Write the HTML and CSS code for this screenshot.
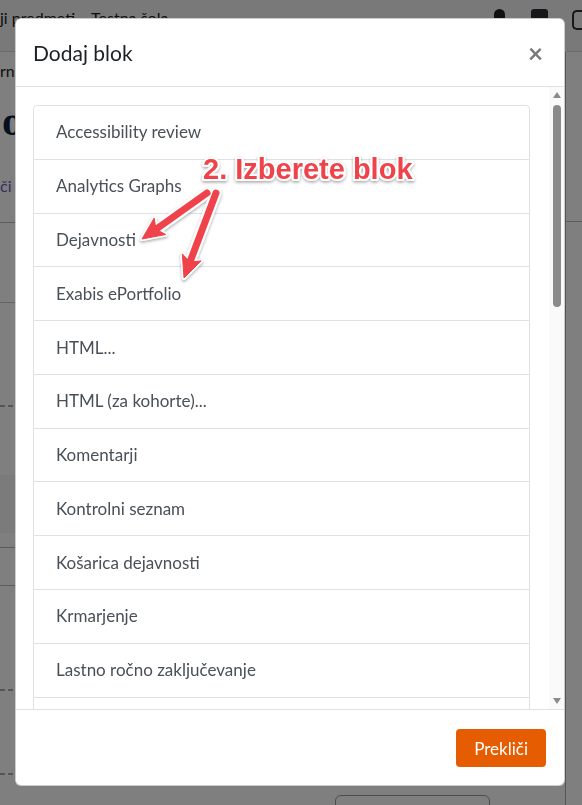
FILE: index.html
```html
<!DOCTYPE html>
<html lang="sl">
<head>
    <meta charset="UTF-8">
    <meta name="viewport" content="width=device-width, initial-scale=1.0">
    <title>Dodaj blok</title>
    <link rel="stylesheet" href="styles.css">
</head>
<body>
    <div id="stran">
        <div class="navbar">
            <span class="nav-link">ji predmeti</span>
            <span class="nav-link">Testna šola</span>
            <span class="nav-prostor"></span>
            <span class="zvonec"></span>
            <span class="avatar"></span>
            <span class="nav-rob"></span>
        </div>
        <div class="telo">
            <div class="levo">
                <div class="drob">rn</div>
                <div class="naslov">o</div>
                <div class="drob vijolicna">či</div>
                <div class="crta c1"></div>
                <div class="crta c2"></div>
                <div class="crtice c3"></div>
                <div class="pas c4"></div>
                <div class="crta c5"></div>
                <div class="crta c6"></div>
                <div class="crtice c7"></div>
                <div class="crtice c8"></div>
            </div>
            <div class="sredina">
                <div class="gumb-dno"></div>
            </div>
            <div class="desno">
                <div class="crta c9"></div>
            </div>
        </div>
    </div>

    <div class="ozadje">
        <div class="modal">
            <div class="modal-glava">
                <h5 class="modal-naslov">Dodaj blok</h5>
                <span class="zapri">×</span>
            </div>
            <div class="modal-telo">
                <div class="okno">
                    <div class="seznam">
                        <div class="postavka">Accessibility review</div>
                        <div class="postavka">Analytics Graphs</div>
                        <div class="postavka">Dejavnosti</div>
                        <div class="postavka">Exabis ePortfolio</div>
                        <div class="postavka">HTML...</div>
                        <div class="postavka">HTML (za kohorte)...</div>
                        <div class="postavka">Komentarji</div>
                        <div class="postavka">Kontrolni seznam</div>
                        <div class="postavka">Košarica dejavnosti</div>
                        <div class="postavka">Krmarjenje</div>
                        <div class="postavka">Lastno ročno zaključevanje</div>
                        <div class="postavka"></div>
                    </div>
                </div>
                <div class="drsnik">
                    <div class="drsnik-gor"></div>
                    <div class="drsnik-palec"></div>
                    <div class="drsnik-prostor"></div>
                    <div class="drsnik-dol"></div>
                </div>
            </div>
            <div class="modal-noga">
                <button class="gumb">Prekliči</button>
            </div>
        </div>
    </div>

    <svg class="opomba" width="582" height="805" viewBox="0 0 582 805">
        <defs>
            <filter id="senca" x="-20%" y="-20%" width="140%" height="140%">
                <feDropShadow dx="0" dy="1.5" stdDeviation="1.5" flood-color="#000" flood-opacity="0.35"/>
            </filter>
        </defs>
        <g filter="url(#senca)">
            <g class="puscica-obroba">
                <line x1="207" y1="193" x2="155" y2="230"/>
                <path d="M142 239 L165.7 234.5 L155.9 229.2 L154.2 218.1 Z"/>
                <line x1="216" y1="193" x2="189.6" y2="263"/>
                <path d="M184 278 L201.1 260.9 L190 262.1 L182.3 253.9 Z"/>
            </g>
            <g class="puscica">
                <line x1="207" y1="193" x2="155" y2="230"/>
                <path d="M142 239 L165.7 234.5 L155.9 229.2 L154.2 218.1 Z"/>
                <line x1="216" y1="193" x2="189.6" y2="263"/>
                <path d="M184 278 L201.1 260.9 L190 262.1 L182.3 253.9 Z"/>
            </g>
            <text class="opomba-besedilo" x="203" y="179">2. Izberete blok</text>
        </g>
    </svg>
</body>
</html>
```

FILE: styles.css
```css
html, body {
    margin: 0;
    height: 100%;
    overflow: hidden;
}

body {
    font-family: Lato, "Noto Sans", sans-serif;
    background-color: white;
    color: #1d2125;
}

/* stran v ozadju */
#stran {
    height: 100%;
    display: flex;
    flex-direction: column;
}

.navbar {
    height: 52px;
    flex: none;
    display: flex;
    align-items: flex-start;
    gap: 16px;
    padding-top: 8px;
    box-sizing: border-box;
    background-color: #f3f3f3;
    border-bottom: 1px solid #d8d8d8;
    font-size: 16px;
}

.nav-link { color: #1d2125; }
.nav-prostor { flex: 1; }

.zvonec {
    width: 11px;
    height: 10px;
    margin-top: 1px;
    background-color: #1d2125;
    border-radius: 6px 6px 1px 1px;
}

.avatar {
    width: 17px;
    height: 14px;
    margin: 1px 8px 0 10px;
    background-color: #2b2f33;
    border-radius: 3px;
}

.nav-rob {
    width: 8px;
    height: 16px;
    margin-top: 2px;
    border: 2px solid #2b2f33;
    border-right: none;
    border-radius: 5px 0 0 5px;
}

.telo {
    flex: 1;
    display: flex;
}

.levo {
    width: 15px;
    display: flex;
    flex-direction: column;
}

.drob {
    font-size: 16px;
    white-space: nowrap;
    color: #1d2125;
}

.levo .drob:first-child { margin-top: 9px; }

.naslov {
    margin: 19px 0 0 2px;
    font-family: "Liberation Serif", serif;
    font-weight: bold;
    font-size: 42px;
    line-height: 44px;
    color: #0f1d3c;
}

.vijolicna {
    margin-top: 33px;
    color: #6b5fc0;
}

.crta {
    height: 0;
    border-top: 1px solid #b9b9b9;
}

.c1 { margin-top: 27px; }
.c2 { margin-top: 79px; border-color: #c8c8c8; }

.crtice {
    width: 13px;
    height: 2px;
    background: linear-gradient(to right, #aaa 0 5px, transparent 5px 8px, #aaa 8px 13px);
}

.c3 { margin-top: 102px; }
.pas {
    height: 58px;
    margin-top: 68px;
    background-color: #f6f6f6;
}
.c5 { margin-top: 14px; }
.c6 { margin-top: 37px; }
.c7 { margin-top: 103px; }
.c8 { margin-top: 82px; }

.sredina {
    flex: 1;
    display: flex;
    flex-direction: column;
    justify-content: flex-end;
}

.gumb-dno {
    width: 153px;
    height: 22px;
    margin: 0 0 -14px 320px;
    border: 1px solid #9a9a9a;
    border-radius: 6px;
}

.desno {
    width: 16px;
    border-left: 1px solid #aaa;
}

.c9 { margin-top: 169px; }

/* modal */
.ozadje {
    position: fixed;
    top: 0;
    left: 0;
    right: 0;
    bottom: 0;
    box-sizing: border-box;
    padding: 18px 17px 19px 15px;
    display: flex;
    background-color: rgba(0, 0, 0, 0.5);
}

.modal {
    flex: 1;
    display: flex;
    flex-direction: column;
    background-color: white;
    border: 1px solid rgba(0, 0, 0, 0.2);
    border-radius: 6px;
    overflow: hidden;
}

.modal-glava {
    height: 68px;
    flex: none;
    box-sizing: border-box;
    display: flex;
    align-items: center;
    justify-content: space-between;
    padding: 0 21px 0 17px;
    border-bottom: 1px solid #dee2e6;
}

.modal-naslov {
    margin: 0;
    font-size: 21px;
    font-weight: normal;
    color: #1d2125;
}

.zapri {
    font-size: 26px;
    font-weight: bold;
    line-height: 1;
    color: #7a7a7a;
    cursor: pointer;
}

.modal-telo {
    flex: 1;
    min-height: 0;
    display: flex;
}

.okno {
    flex: 1;
    overflow: hidden;
    padding: 18px 19px 0 17px;
}

.drsnik {
    width: 15px;
    display: flex;
    flex-direction: column;
    background-color: #fafafa;
}

.drsnik-gor, .drsnik-dol {
    width: 0;
    height: 0;
    margin-left: 4px;
    border-left: 4px solid transparent;
    border-right: 4px solid transparent;
}

.drsnik-gor {
    margin-top: 5px;
    border-bottom: 6px solid #8b8b8b;
}

.drsnik-dol {
    margin-bottom: 5px;
    border-top: 6px solid #8b8b8b;
}

.drsnik-palec {
    width: 8px;
    height: 202px;
    margin: 7px 0 0 4px;
    border-radius: 4px;
    background-color: #8b8b8b;
}

.drsnik-prostor { flex: 1; }

.seznam {
    border: 1px solid #dee2e6;
    border-radius: 4px;
}

.postavka {
    padding: 14.4px 22px;
    line-height: 24px;
    height: 24px;
    font-size: 17px;
    color: #495057;
    border-bottom: 1px solid #dee2e6;
}

.postavka:last-child { border-bottom: none; }

.modal-noga {
    height: 76px;
    flex: none;
    box-sizing: border-box;
    display: flex;
    align-items: center;
    justify-content: flex-end;
    padding: 1px 18px 0 0;
    border-top: 1px solid #dee2e6;
}

.gumb {
    height: 38px;
    padding: 0 18px;
    font-family: Lato, "Noto Sans", sans-serif;
    font-size: 17px;
    color: white;
    background-color: #e65c00;
    border: none;
    border-radius: 4px;
}

/* opomba s puščicami */
.opomba {
    position: fixed;
    top: 0;
    left: 0;
    pointer-events: none;
}

.puscica-obroba line {
    stroke: white;
    stroke-width: 11;
    stroke-linecap: round;
}

.puscica-obroba path {
    fill: white;
    stroke: white;
    stroke-width: 4;
    stroke-linejoin: round;
}

.puscica line {
    stroke: #f0434b;
    stroke-width: 7;
    stroke-linecap: round;
}

.puscica path {
    fill: #f0434b;
    stroke: #f0434b;
    stroke-width: 1;
    stroke-linejoin: round;
}

.opomba-besedilo {
    font-family: "Liberation Sans", Arial, sans-serif;
    font-weight: bold;
    font-size: 29px;
    fill: #f0434b;
    stroke: white;
    stroke-width: 4px;
    stroke-linejoin: round;
    paint-order: stroke;
}
```
